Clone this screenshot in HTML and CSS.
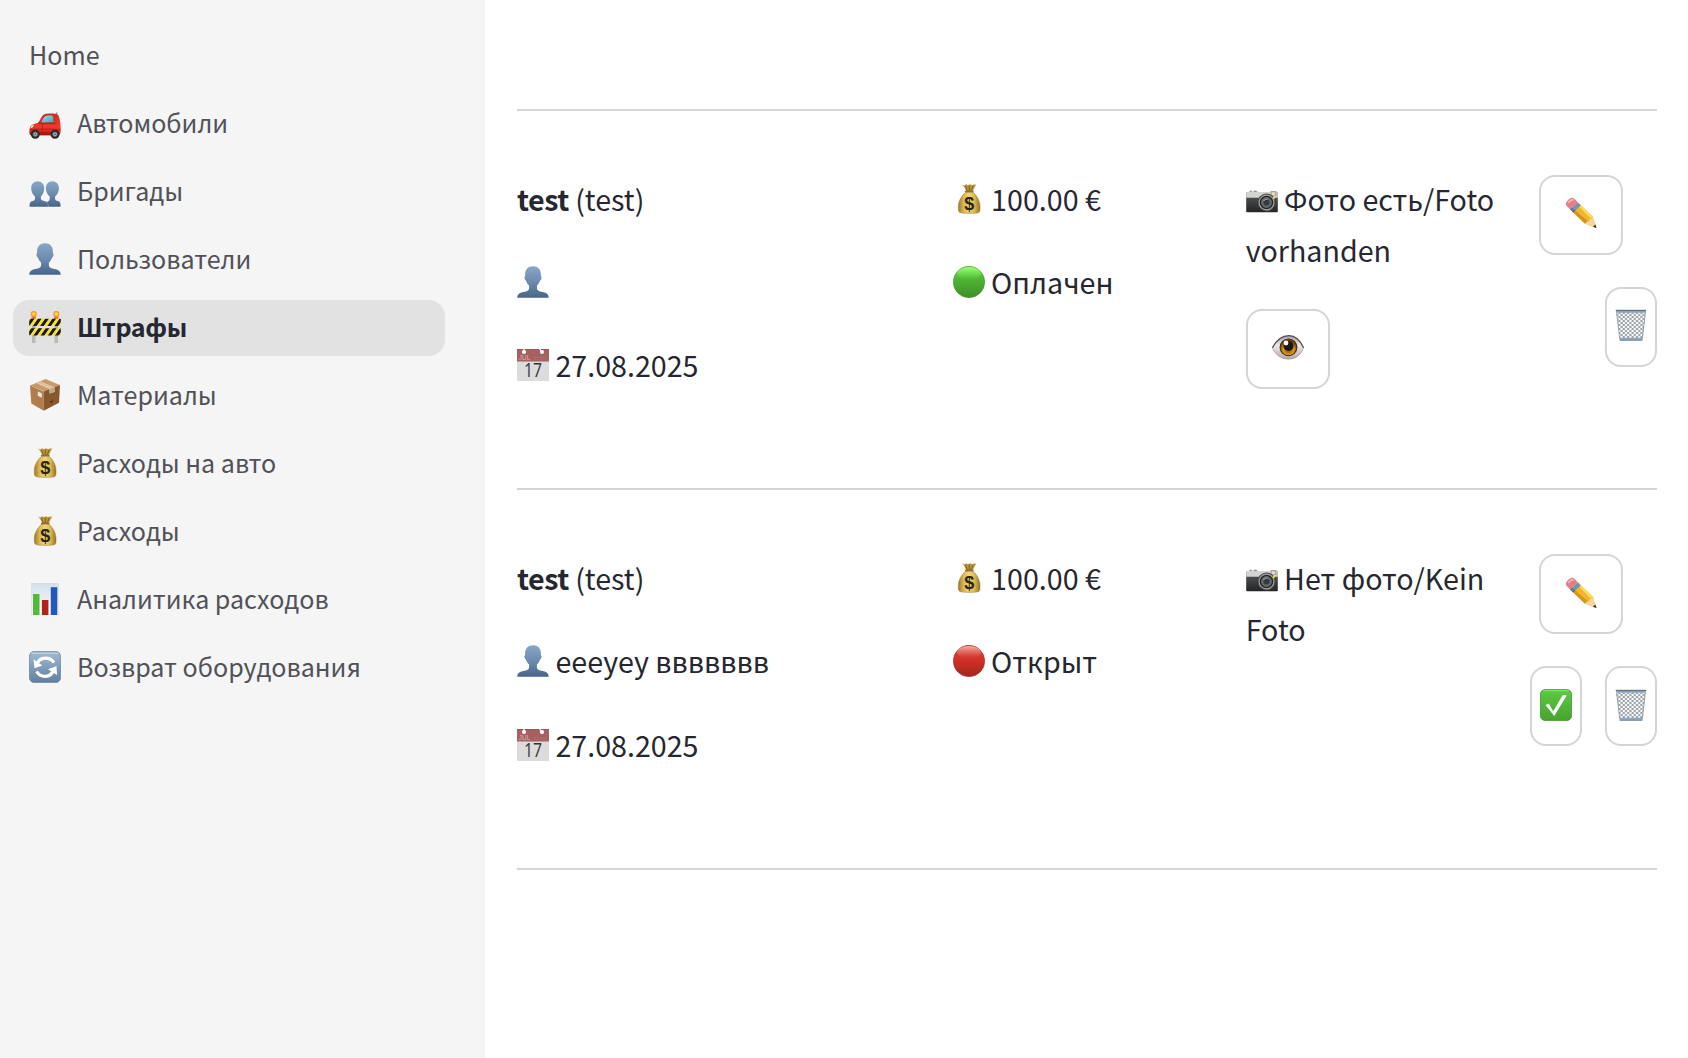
FILE: index.html
```html
<!DOCTYPE html>
<html lang="ru">
<head>
<meta charset="utf-8">
<title>Штрафы</title>
<link rel="stylesheet" href="styles.css">
</head>
<body>
<svg class="sprite" width="0" height="0" aria-hidden="true">
  <defs>
    <linearGradient id="g-person" x1="0" y1="0" x2="0" y2="1"><stop offset="0" stop-color="#88a6c6"/><stop offset=".5" stop-color="#6d8bae"/><stop offset="1" stop-color="#48648a"/></linearGradient>
    <linearGradient id="g-green" x1="0" y1="0" x2="0" y2="1"><stop offset="0" stop-color="#5fd543"/><stop offset=".45" stop-color="#4fb234"/><stop offset="1" stop-color="#3f8e28"/></linearGradient>
    <linearGradient id="g-red" x1="0" y1="0" x2="0" y2="1"><stop offset="0" stop-color="#d94a3e"/><stop offset=".5" stop-color="#cf2f26"/><stop offset="1" stop-color="#a5251d"/></linearGradient>
    <linearGradient id="g-shine-green" x1="0" y1="0" x2="0" y2="1"><stop offset="0" stop-color="#a0ff7c"/><stop offset="1" stop-color="#6fe04f" stop-opacity="0"/></linearGradient>
    <linearGradient id="g-shine-red" x1="0" y1="0" x2="0" y2="1"><stop offset="0" stop-color="#f6b5ae"/><stop offset="1" stop-color="#e0564b" stop-opacity="0"/></linearGradient>
    <linearGradient id="g-bag" x1="0" y1="0" x2="1" y2="0"><stop offset="0" stop-color="#9a7a2c"/><stop offset=".25" stop-color="#dcb953"/><stop offset=".5" stop-color="#f0d873"/><stop offset=".75" stop-color="#dcb64e"/><stop offset="1" stop-color="#94732a"/></linearGradient>
    <linearGradient id="g-sync" x1="0" y1="0" x2="0" y2="1"><stop offset="0" stop-color="#a3bbd2"/><stop offset="1" stop-color="#617f9f"/></linearGradient>
    <linearGradient id="g-check" x1="0" y1="0" x2="0" y2="1"><stop offset="0" stop-color="#5ccb43"/><stop offset="1" stop-color="#46a42d"/></linearGradient>
    <linearGradient id="g-chart" x1="0" y1="0" x2="0" y2="1"><stop offset="0" stop-color="#d5e0ec"/><stop offset="1" stop-color="#fbfcfd"/></linearGradient>
    <linearGradient id="g-glass" x1="0" y1="0" x2="1" y2="1"><stop offset="0" stop-color="#a6dce6"/><stop offset="1" stop-color="#4e9cab"/></linearGradient>
    <linearGradient id="g-red-body" x1="0" y1="0" x2="0" y2="1"><stop offset="0" stop-color="#d92a20"/><stop offset=".6" stop-color="#ee3a2d"/><stop offset="1" stop-color="#b71a12"/></linearGradient>
    <linearGradient id="g-camera" x1="0" y1="0" x2="0" y2="1"><stop offset="0" stop-color="#585a5b"/><stop offset="1" stop-color="#242526"/></linearGradient>
    <linearGradient id="g-eye" x1="0" y1="0" x2="0" y2="1"><stop offset="0" stop-color="#a79fae"/><stop offset=".4" stop-color="#ece9ec"/><stop offset="1" stop-color="#b9a7a6"/></linearGradient>
    <radialGradient id="g-iris" cx=".5" cy=".65" r=".55"><stop offset="0" stop-color="#7a4d08"/><stop offset=".6" stop-color="#d99a14"/><stop offset="1" stop-color="#6b4207"/></radialGradient>
    <radialGradient id="g-lamp"><stop offset="0" stop-color="#fff27a"/><stop offset=".45" stop-color="#ffc928"/><stop offset="1" stop-color="#f5822a"/></radialGradient>
    <pattern id="p-mesh" width="4.400" height="4" patternUnits="userSpaceOnUse"><path d="M0 0 4.400 4M4.400 0 0 4" stroke="#4f5a66" stroke-width=".6"/></pattern>
    <pattern id="p-stripe" width="7.2" height="8" patternUnits="userSpaceOnUse" patternTransform="skewX(-35)"><rect width="7.2" height="8" fill="#f2df3a"/><rect width="3.6" height="8" fill="#1b1a17"/></pattern>
  </defs>

  <symbol id="car" viewBox="0 0 32 32">
    <g transform="translate(0 3.900)">
    <path d="M27.3 1.2v4" transform="rotate(14 27 4)" stroke="#777" stroke-width=".8"/>
    <path d="M.3 21c0-4 1.200-6.400 3.400-7.400l6-1.900C11.500 8 13.500 3.800 16 3.200c3.200-.8 9.500-.7 12.200.1 2 .7 3 7 3.300 11 .2 3.500.3 6.500-.3 8.500-.3 1.200-1.300 1.600-2.700 1.600H3.500C1 24.400.3 23.500.3 21z" fill="url(#g-red-body)"/>
    <path d="M11.800 12c1-3.300 3-7 5.200-7.500 2.200-.5 6-.5 6.800 0 .9.600 1.200 4.500 1.300 7.300z" fill="url(#g-glass)" stroke="#8d1a14" stroke-width=".6"/>
    <path d="M13.500 12.500v10M1 18.800c8-.8 20-.8 30.500 0M10 12.800h17.500" stroke="#a51812" stroke-width=".6" fill="none"/>
    <path d="M9.200 12c.2-1.600 2-2 3-.8v1.600H9.600z" fill="#c9221a"/>
    <path d="M1.500 17.300c.4-2 1.400-3 3.200-3.400-.1 2-1.200 3.300-3.200 3.400z" fill="#fbe3dd"/>
    <path d="M11 21.300h11v3H11z" fill="#a51b14"/>
    <g fill="#26282a"><circle cx="6.300" cy="23.300" r="4.500"/><circle cx="26" cy="23.300" r="4.500"/></g>
    <g fill="#b3b7ba" stroke="#5e6265" stroke-width=".9"><circle cx="6.300" cy="23.300" r="2.300"/><circle cx="26" cy="23.300" r="2.300"/></g>
    <g fill="#33363a"><circle cx="6.300" cy="23.300" r=".8"/><circle cx="26" cy="23.300" r=".8"/></g>
    </g>
  </symbol>

  <symbol id="people" viewBox="0 0 32 32">
    <g transform="translate(0 2.700)">
    <g fill="url(#g-person)"><path d="M8.700 3.500c4 0 6.500 2.900 6.500 7 0 3.700-1.500 6.300-3.300 8.200v2.600c0 1.700 4.600 1.800 6.300 3.200 1 .9 1.200 2.300 1.200 4.500H.5c0-2.200.2-3.900 1.200-4.800 1.300-1.200 4.300-1 4.300-2.900v-2.600C3.800 16.800 2.200 14.200 2.200 10.500c0-4.100 2.500-7 6.500-7z"/>
    <path d="M23.400 3.500c4 0 6.500 2.900 6.500 7 0 3.700-1.600 6.300-3.800 8.200v2.600c0 1.900 3.300 1.700 4.600 2.900.8.800.9 2.600.9 4.800H19.300c0-2-.7-3.500-2.100-4.500 1.500-.8 3.500-1.200 3.500-3.200v-2.600c-2.200-1.900-3.800-4.500-3.800-8.200 0-4.100 2.500-7 6.500-7z"/></g>
    <path d="M15.500 23.800c2.600.7 3.800 2.300 3.800 5.200" stroke="#8da8c4" stroke-width=".6" fill="none"/>
    </g>
  </symbol>

  <symbol id="person" viewBox="0 0 32 32">
    <path d="M16 .2c5 0 7.900 3.300 7.900 8.200 0 .8 0 1.300-.1 1.800.8.100.9 1 .6 2.200-.2 1.200-.7 1.700-1.200 1.800-.6 2.200-1.900 4.100-3.300 5.300v2.700c0 2.500 2.600 3.100 5.600 3.700 4.200.9 6.200 2.300 6.200 5.900H.3c0-3.600 2-5 6.200-5.900 3-.6 5.600-1.200 5.600-3.700v-2.700c-1.400-1.200-2.700-3.100-3.300-5.300-.5-.1-1-.6-1.200-1.800-.3-1.200-.2-2.100.6-2.200-.1-.5-.1-1-.1-1.800C8.100 3.500 11 .2 16 .2z" fill="url(#g-person)"/>
  </symbol>

  <symbol id="barrier" viewBox="0 0 32 32">
    <path d="M3 22h3.500v10H3zM25.500 22H29v10h-3.500z" fill="#b9b9b9"/>
    <path d="M3 14h3.500v4H3zM25.500 14H29v4h-3.500z" fill="#aaa"/>
    <g fill="url(#g-lamp)"><circle cx="4.700" cy="3" r="3"/><circle cx="27.300" cy="3" r="3"/></g>
    <path d="M2.500 5.500h4.400V8H2.500zM25.100 5.500h4.400V8h-4.400z" fill="#ee7434"/>
    <rect x=".2" y="7.700" width="31.600" height="7.200" rx=".8" fill="url(#p-stripe)"/>
    <rect x=".2" y="17.200" width="31.600" height="7.300" rx=".8" fill="url(#p-stripe)"/>
  </symbol>

  <symbol id="box" viewBox="0 0 32 32">
    <path d="M1 6.500 16.500 0 31 6 15.500 12.500z" fill="#c79a6b"/>
    <path d="M1 6.500l13.700 6v19.300L2.300 24.500z" fill="#b27d4b"/>
    <path d="M31 6 14.700 12.500v19.300L30 23.800z" fill="#88572c"/>
    <path d="M7 4 11 2.300 25.500 8.200v4.800l-5 1.600V10z" fill="#e5cdb0"/>
    <path d="M9.300 3.100l14.400 6" stroke="#cfac83" stroke-width=".7"/>
    <path d="M20.500 10l5-1.800v4.800l-5 1.600z" fill="#bda78c"/>
    <path d="M8.800 12.500l4 1.800v4.500l-4-2z" fill="#e9e6e0"/>
    <path d="M20.500 22.500l4-1.500-1.800 3.600z" fill="#54351c"/>
  </symbol>

  <symbol id="bag" viewBox="0 0 32 32">
    <path d="M9 1.600l2.300.8L13 1.300l2 .9 2-1 2 1 1.700-.8 2.600.3c-1.500 2-3 4.600-3.500 7.400h-6.500C12.600 6 11 3.500 9 1.600z" fill="#b8943c"/>
    <path d="M12.500 3l2 5.700M16.300 2.500v6.300M20 3l-2 5.700" stroke="#745718" stroke-width=".8"/>
    <path d="M12.300 9.500h8c3.700 3.400 6.700 8.500 6.700 14 0 2.500.2 4.700-.9 5.800-1.700 1.500-17.700 1.500-19.600 0-1.200-1.100-1.200-3.300-1.200-5.800 0-5.500 3.400-10.600 7-14z" fill="url(#g-bag)" stroke="#987528" stroke-width=".5"/>
    <path d="M12 8.700c2.500-.7 6-.7 8.500 0" stroke="#94702a" stroke-width="1.600" fill="none"/>
    <text x="16.200" y="26.700" class="bag-sign" text-anchor="middle">$</text>
  </symbol>

  <symbol id="chart" viewBox="0 0 32 32">
    <rect x="2.700" y=".3" width="26.600" height="31.500" fill="url(#g-chart)" stroke="#ccd6e0" stroke-width=".5"/>
    <path d="M3 8h26M3 16h26M3 24h26" stroke="#e2e9f0" stroke-width=".5"/>
    <rect x="4" y="11" width="6.500" height="21" fill="#55b938"/>
    <rect x="12.900" y="17" width="6.500" height="15" fill="#b52219"/>
    <rect x="21.800" y="4.200" width="6.500" height="27.800" fill="#2458b8"/>
  </symbol>

  <symbol id="sync" viewBox="0 0 32 32">
    <rect x=".4" y=".4" width="31.200" height="31.200" rx="5" fill="url(#g-sync)" stroke="#68839f" stroke-width=".8"/>
    <path d="M3 2.300h26" stroke="#c4d5e4" stroke-width="1" stroke-linecap="round"/>
    <g fill="none" stroke="#fff" stroke-width="3.200"><path d="M7.400 14.500C9 8.600 13 7.200 16.500 7.200c3.800 0 6.700 1.600 8.500 4.500"/><path d="M24.800 18c-1.300 5.300-5.200 7.300-8.700 7.300-3.800 0-6.700-1.800-8.500-4.800"/></g>
    <path d="M4.500 8.300l1 9 7.800-2.700zM28 24l-.5-9-8.400 3.300z" fill="#fff"/>
  </symbol>

  <symbol id="calendar" viewBox="0 0 32 32">
    <rect width="32" height="32" fill="#dcdcdc"/>
    <rect width="32" height="12.500" fill="#a66060"/>
    <path d="M0 .4h32" stroke="#8f5555" stroke-width=".8"/>
    <g fill="#fff"><circle cx="7" cy="3" r="2.100"/><circle cx="25" cy="3" r="2.100"/></g>
    <path d="M7 3V0M24.500 2.500l-2-2.500" stroke="#fff" stroke-width="1.200"/>
    <path d="M17 8.600h13M17 10.300h13" stroke="#b07272" stroke-width=".8" stroke-dasharray="2 .8"/>
    <text x="1.700" y="10.600" class="cal-month">JUL</text>
    <text x="7" y="28.300" class="cal-day" textLength="18" lengthAdjust="spacingAndGlyphs">17</text>
  </symbol>

  <symbol id="green" viewBox="0 0 32 32">
    <circle cx="16" cy="16" r="15.700" fill="url(#g-green)" stroke="#3f9629" stroke-width=".6"/>
    <ellipse cx="16" cy="7.500" rx="12" ry="6.500" fill="url(#g-shine-green)"/>
  </symbol>
  <symbol id="red" viewBox="0 0 32 32">
    <circle cx="16" cy="16" r="15.700" fill="url(#g-red)" stroke="#a3271f" stroke-width=".6"/>
    <ellipse cx="16" cy="7.500" rx="12" ry="6.500" fill="url(#g-shine-red)"/>
  </symbol>

  <symbol id="camera" viewBox="0 0 32 32">
    <path d="M3 8.200h9v2H3z" fill="#c5c5c5"/><path d="M4 8.200h1.500M8 8.200h2.500" stroke="#777"/>
    <rect x=".2" y="9" width="31.600" height="20.300" rx="1" fill="url(#g-camera)"/>
    <path d="M.2 10c0-.7.4-1 1-1H31c.5 0 .8.300.8 1v4.700H.2z" fill="#d3d3d1"/>
    <rect x="24.500" y="8" width="6" height="5" fill="#a7a59a"/><rect x="25.700" y="9.300" width="3.400" height="2.800" fill="#e5dfc7"/>
    <circle cx="20.500" cy="19.500" r="9" fill="#434546"/>
    <circle cx="20.500" cy="19.500" r="7.400" fill="#242627" stroke="#a2a5a5" stroke-width="1.100"/>
    <circle cx="20.500" cy="19.500" r="4.800" fill="#555b5e" stroke="#848889" stroke-width=".9"/>
    <circle cx="20.500" cy="19.500" r="2.700" fill="#33393c"/>
    <path d="M17.500 18c1-1.500 2.300-2 4-1.700" stroke="#c0c8cb" stroke-width=".8" fill="none"/>
    <circle cx="28" cy="14.800" r="1.200" fill="#f2d636"/>
  </symbol>

  <symbol id="pencil" viewBox="0 0 32 32">
    <path d="M5.200 12.500 12.800 5.300 27.700 19.500l3.800 11.600-11.500-4.300z" fill="#eeb72c"/>
    <path d="M7.800 14.900 10 12.900 24.300 25.600l-4.300 1.200z" fill="#d5941c"/>
    <path d="M13 8.600l1.800-1.400 12.900 12.300-2 2z" fill="#ffdb55"/>
    <path d="M20 26.800l2-2.400 1.700.1.700-2 1.600-.3 1.700-2.700 3.800 11.600z" fill="#f5d59f"/>
    <path d="M28 29.800l2.300-2.400 1.200 3.700z" fill="#2d2b2a"/>
    <path d="M5.200 12.500 12.800 5.300l3 3.100-7.700 7z" fill="#7992b0"/><path d="M7.100 14.300 9 12.600l.9.900-1.800 1.900zM5.200 12.500l1.900-1.700.9.900-1.800 1.800z" fill="#4d6179"/>
    <path d="M1.500 8.800c-1-1.200-.9-3 .5-4.600l2-2.100c1.600-1.500 3.800-2 5.200-.5L12.800 5.300l-7.600 7.200z" fill="#e27f87"/>
    <path d="M3.200 5.800l2.300-2.400c1-.9 2-.9 3-.2" stroke="#f5b3b5" stroke-width="1.800" fill="none"/>
  </symbol>

  <symbol id="eye" viewBox="0 0 32 32">
    <g transform="translate(0 -1)">
    <path d="M.4 17.300C4.500 9.500 9.500 4.900 17 4.900c7 0 11.200 4.700 14.600 12.400C28 25 23.500 28.300 16.500 28.300 9 28.300 4 24 .4 17.300z" fill="url(#g-eye)"/>
    <circle cx="16.500" cy="16.300" r="8.900" fill="#3d2710"/><circle cx="16.500" cy="16.300" r="8" fill="url(#g-iris)"/>
    <circle cx="16.500" cy="15" r="5" fill="#1e1716"/><circle cx="14" cy="12" r="2.400" fill="#fff"/>
    <path d="M.4 16.900C4.500 9 9.500 4.700 17 4.700c7 0 11.200 4.700 14.600 12.200" stroke="#51484e" stroke-width="1.200" fill="none"/>
    <path d="M.6 17.700C4.500 24.500 9 28 16.500 28c7 0 11.200-3 14.800-10.300" stroke="#998583" stroke-width=".6" fill="none"/>
    </g>
  </symbol>

  <symbol id="trash" viewBox="0 0 32 32">
    <path d="M1.200 3.300h29.500l-3 27.500H4.800z" fill="#fff"/>
    <path d="M1.200 3.300h29.500l-3 27.500H4.800z" fill="url(#p-mesh)"/>
    <path d="M1.600 3.500 4.800 30M30.300 3.500 27.300 30" stroke="#8795a3" stroke-width=".8"/>
    <path d="M.8 1.100h30.400l-.5 2.600H1.300z" fill="#8da2b7"/><path d="M.8 1.300h30.400" stroke="#4a5a6b" stroke-width=".8"/>
    <path d="M4.400 28.700h23.200l-.3 2.800H4.700z" fill="#8fa8c0"/><path d="M4.700 31.300h22.600" stroke="#52677c" stroke-width=".6"/>
  </symbol>

  <symbol id="check" viewBox="0 0 32 32">
    <rect x=".4" y=".4" width="31.200" height="31.200" rx="5" fill="url(#g-check)" stroke="#41932c" stroke-width=".8"/>
    <path d="M3.500 1.700h25" stroke="#8be373" stroke-width="1" stroke-linecap="round"/>
    <path d="M5.500 15.900l3.200-1.300 4.500 7.600L22.800 6l4 .2L14.200 27z" fill="#fff"/>
  </symbol>
</svg>

<div class="app">
  <nav class="sidebar">
    <a class="nav-item"><span class="nav-label">Home</span></a>
    <a class="nav-item"><svg class="icon"><use href="#car"/></svg><span class="nav-label">Автомобили</span></a>
    <a class="nav-item"><svg class="icon"><use href="#people"/></svg><span class="nav-label">Бригады</span></a>
    <a class="nav-item"><svg class="icon"><use href="#person"/></svg><span class="nav-label">Пользователи</span></a>
    <a class="nav-item active"><svg class="icon"><use href="#barrier"/></svg><span class="nav-label">Штрафы</span></a>
    <a class="nav-item"><svg class="icon"><use href="#box"/></svg><span class="nav-label">Материалы</span></a>
    <a class="nav-item"><svg class="icon"><use href="#bag"/></svg><span class="nav-label">Расходы на авто</span></a>
    <a class="nav-item"><svg class="icon"><use href="#bag"/></svg><span class="nav-label">Расходы</span></a>
    <a class="nav-item"><svg class="icon"><use href="#chart"/></svg><span class="nav-label">Аналитика расходов</span></a>
    <a class="nav-item"><svg class="icon"><use href="#sync"/></svg><span class="nav-label">Возврат оборудования</span></a>
  </nav>

  <main class="content">
    <hr class="divider">
    <section class="fine">
      <div class="column">
        <p class="line"><strong>test</strong> (test)</p>
        <p class="line"><svg class="icon"><use href="#person"/></svg></p>
        <p class="line"><svg class="icon"><use href="#calendar"/></svg> 27.08.2025</p>
      </div>
      <div class="column">
        <p class="line"><svg class="icon"><use href="#bag"/></svg> 100.00 €</p>
        <p class="line"><svg class="icon"><use href="#green"/></svg> Оплачен</p>
      </div>
      <div class="column">
        <p class="line"><svg class="icon"><use href="#camera"/></svg> Фото есть/Foto vorhanden</p>
        <button class="button" aria-label="Фото"><svg class="icon"><use href="#eye"/></svg></button>
      </div>
      <div class="column actions">
        <button class="button" aria-label="Изменить"><svg class="icon"><use href="#pencil"/></svg></button>
        <div class="action-pair">
          <span></span>
          <button class="button narrow" aria-label="Удалить"><svg class="icon"><use href="#trash"/></svg></button>
        </div>
      </div>
    </section>
    <hr class="divider">
    <section class="fine">
      <div class="column">
        <p class="line"><strong>test</strong> (test)</p>
        <p class="line"><svg class="icon"><use href="#person"/></svg> eeeyey ввввввв</p>
        <p class="line"><svg class="icon"><use href="#calendar"/></svg> 27.08.2025</p>
      </div>
      <div class="column">
        <p class="line"><svg class="icon"><use href="#bag"/></svg> 100.00 €</p>
        <p class="line"><svg class="icon"><use href="#red"/></svg> Открыт</p>
      </div>
      <div class="column">
        <p class="line"><svg class="icon"><use href="#camera"/></svg> Нет фото/Kein Foto</p>
      </div>
      <div class="column actions">
        <button class="button" aria-label="Изменить"><svg class="icon"><use href="#pencil"/></svg></button>
        <div class="action-pair">
          <button class="button narrow" aria-label="Оплачен"><svg class="icon"><use href="#check"/></svg></button>
          <button class="button narrow" aria-label="Удалить"><svg class="icon"><use href="#trash"/></svg></button>
        </div>
      </div>
    </section>
    <hr class="divider">
  </main>
</div>
</body>
</html>
```

FILE: styles.css
```css
* {
  box-sizing: border-box;
}

body {
  margin: 0;
  background: #fff;
  color: #262730;
  font-family: "Noto Sans CJK SC", "Noto Sans", sans-serif;
  font-size: 28.65px;
  line-height: 51.2px;
}

.sprite {
  position: absolute;
}

.app {
  display: flex;
  height: 1058px;
  overflow: hidden;
}

.sidebar {
  display: flex;
  flex: none;
  flex-direction: column;
  gap: 12px;
  width: 485px;
  padding: 28px 40px 0 13px;
  background: #f5f5f5;
}

.nav-item {
  display: flex;
  align-items: center;
  gap: 16px;
  height: 56px;
  padding: 0 16px;
  border-radius: 16px;
  color: #515259;
  font-size: 25.07px;
  line-height: 52px;
  white-space: nowrap;
}

.nav-item.active {
  background: #e2e2e2;
  color: #262730;
  font-weight: 700;
  letter-spacing: -0.4px;
}

.nav-label {
  padding-bottom: 4px;
}

.icon {
  flex: none;
  width: 32px;
  height: 32px;
  overflow: visible;
}

.nav-item .icon {
  margin-bottom: 2px;
}

.bag-sign {
  fill: #2b2515;
  font: bold 18px "Liberation Sans", sans-serif;
}

.cal-month {
  fill: #d9b3b3;
  font: 6.5px "Liberation Sans", sans-serif;
}

.cal-day {
  fill: #333;
  font: 19.5px "Open Sans", sans-serif;
}

.content {
  flex: 1;
  padding: 108.8px 31px 0 32px;
}

.divider {
  height: 2px;
  margin: 0;
  border: 0;
  background: #d5d5d6;
}

.fine {
  display: grid;
  grid-template-columns: 403.7px 261px 261px 118.3px;
  gap: 32px;
  height: 377.6px;
  padding: 64px 0;
}

.column {
  display: flex;
  flex-direction: column;
  align-items: flex-start;
}

.line {
  margin: -2.3px 0 34.3px;
}

.line .icon {
  vertical-align: -4px;
}

.line strong {
  letter-spacing: -0.5px;
}

.button {
  display: flex;
  flex: none;
  align-items: center;
  justify-content: center;
  width: 84px;
  height: 80px;
  padding: 0 0 3px;
  border: 2px solid #d5d5d6;
  border-radius: 16px;
  background: #fff;
}

.button.narrow {
  width: 52px;
}

.actions {
  gap: 32px;
}

.action-pair {
  display: grid;
  grid-template-columns: 43.15px 43.15px;
  gap: 32px;
  justify-items: end;
}
```
